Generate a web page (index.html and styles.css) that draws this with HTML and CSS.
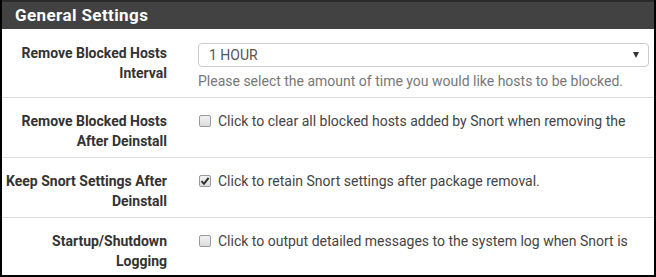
FILE: index.html
```html
<!DOCTYPE html>
<html lang="en">
<head>
  <meta charset="UTF-8">
  <title>General Settings</title>
  <link rel="stylesheet" href="styles.css">
</head>
<body>

  <div class="panel">
    <div class="panel-heading">General Settings</div>

    <!-- Block interval -->
    <div class="row first">
      <div class="label">Remove Blocked Hosts Interval</div>
      <div class="control">
        <div class="select">
          <span>1 HOUR</span>
          <span class="caret"></span>
        </div>
        <div class="help">Please select the amount of time you would like hosts to be blocked.</div>
      </div>
    </div>

    <div class="row">
      <div class="label">Remove Blocked Hosts After Deinstall</div>
      <div class="control check">
        <span class="box"></span>
        <span>Click to clear all blocked hosts added by Snort when removing the</span>
      </div>
    </div>

    <div class="row">
      <div class="label">Keep Snort Settings After Deinstall</div>
      <div class="control check">
        <span class="box">
          <svg width="10" height="10" viewBox="0 0 10 10"><path d="M1.5 5.2 L4 7.8 L8.6 1.8" fill="none" stroke="#2b2b2b" stroke-width="1.9"/></svg>
        </span>
        <span>Click to retain Snort settings after package removal.</span>
      </div>
    </div>

    <div class="row last">
      <div class="label">Startup/Shutdown Logging</div>
      <div class="control check">
        <span class="box"></span>
        <span>Click to output detailed messages to the system log when Snort is</span>
      </div>
    </div>
  </div>

</body>
</html>
```

FILE: styles.css
```css
* {
  box-sizing: border-box;
}

body {
  margin: 0;
  font-family: Roboto, 'Liberation Sans', sans-serif;
  background: #fff;
}

.panel {
  width: 656px;
  height: 277px;
  border: 2px solid #000;
  border-top: none;
  overflow: hidden;
  background: #fff;
}

.panel-heading {
  height: 29px;
  background: #424242;
  color: #fff;
  font-size: 17px;
  font-weight: bold;
  letter-spacing: 0.4px;
  padding-left: 13px;
  border-top: 2px solid #2a2a2a;
  line-height: 26px;
}

.row {
  display: grid;
  grid-template-columns: 165px 1fr;
  column-gap: 31px;
  padding: 13px 5px 6px 0;
  border-bottom: 1px solid #ddd;
  font-size: 14px;
  line-height: 20px;
}

.row.first {
  padding-top: 14px;
}

.row.last {
  border-bottom: none;
}

.label {
  text-align: right;
  font-weight: bold;
  color: #333;
}

.select {
  height: 24px;
  border: 1px solid #ccc;
  border-radius: 4px;
  display: flex;
  align-items: center;
  justify-content: space-between;
  padding: 0 9px 0 10px;
  color: #555;
}

.caret {
  width: 0;
  height: 0;
  border-left: 3.5px solid transparent;
  border-right: 3.5px solid transparent;
  border-top: 6px solid #333;
}

.help {
  margin-top: 4px;
  color: #777;
}

.check {
  display: flex;
  align-items: center;
  gap: 7px;
  color: #444;
  white-space: nowrap;
  padding-left: 1px;
  height: 20px;
}

.box {
  width: 12px;
  height: 12px;
  border: 1px solid #9a9a9a;
  border-radius: 2px;
  background: linear-gradient(#f2f2f2, #dcdcdc);
  display: flex;
  align-items: center;
  justify-content: center;
  flex-shrink: 0;
}
```
